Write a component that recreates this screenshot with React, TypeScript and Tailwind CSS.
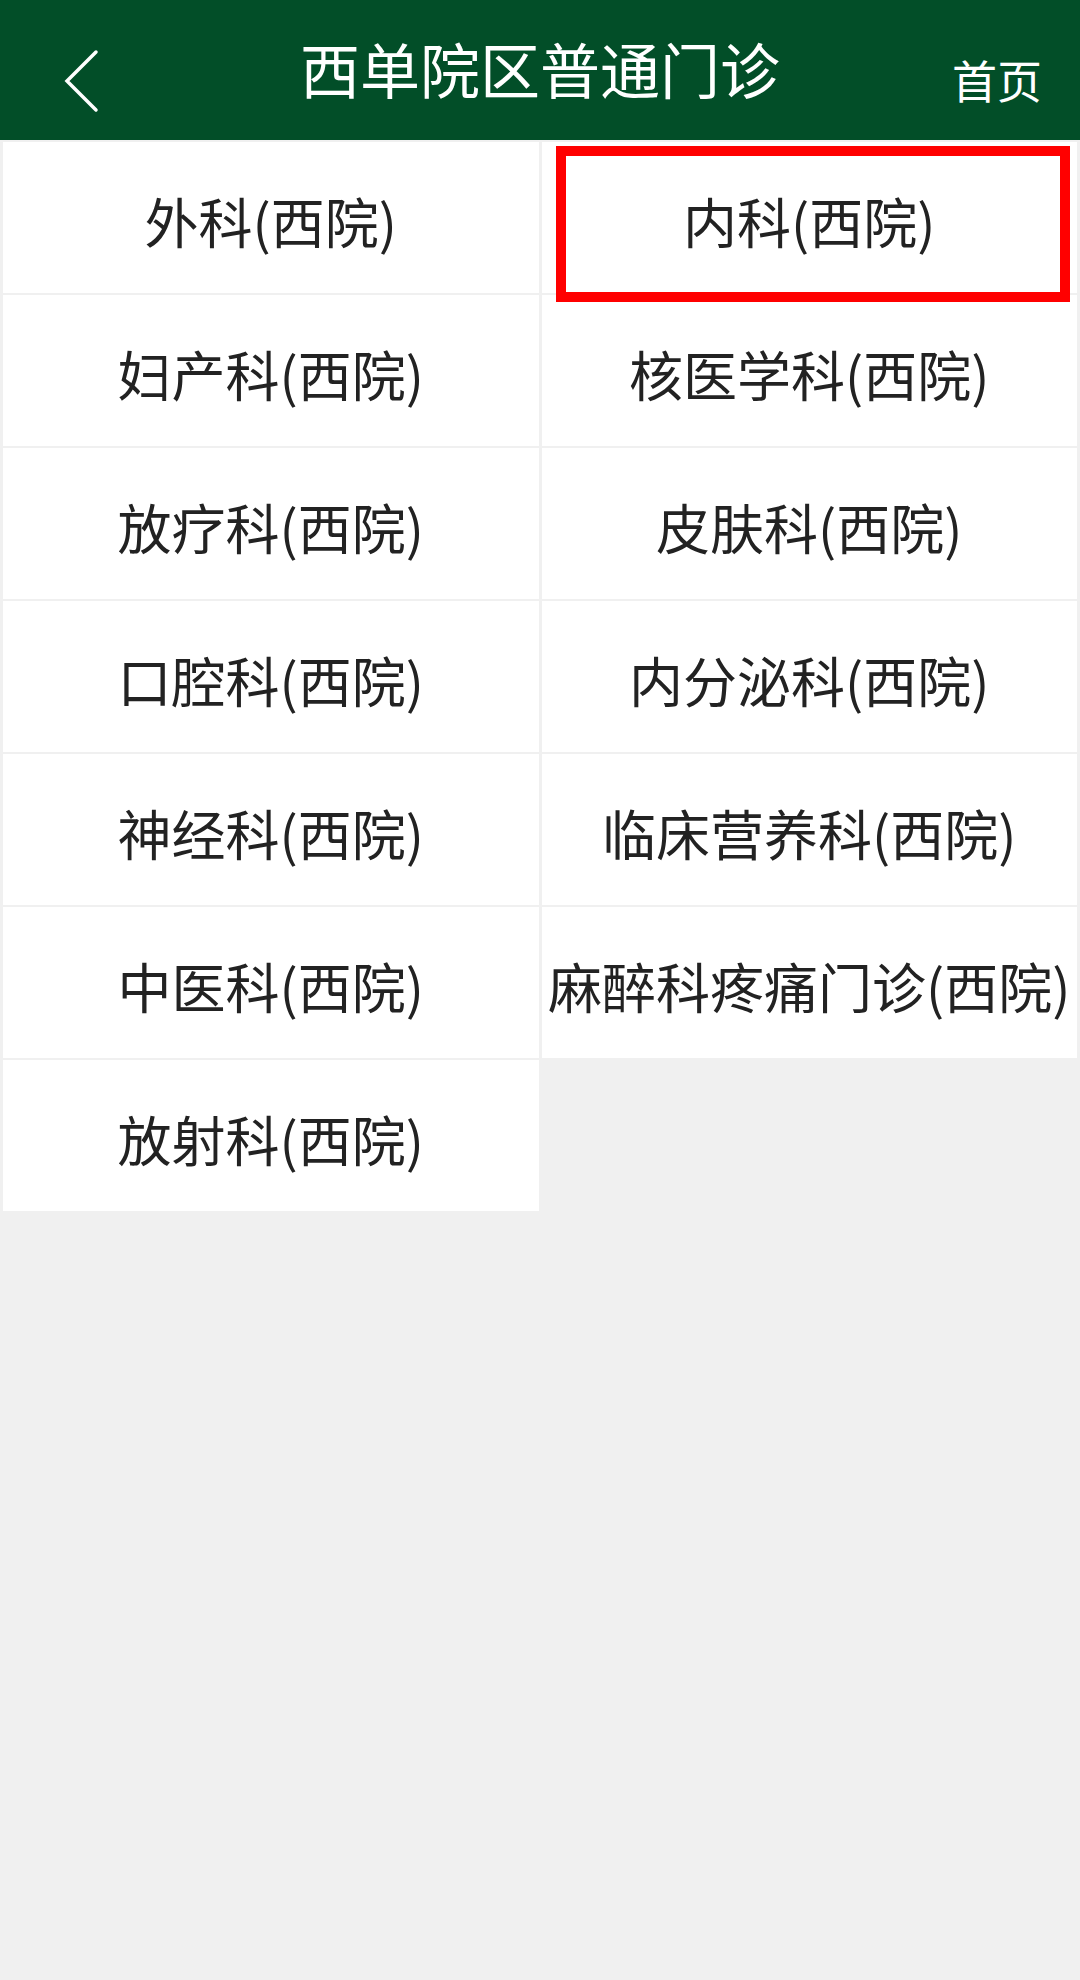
import React from "react";

const departments = [
  "外科(西院)",
  "内科(西院)",
  "妇产科(西院)",
  "核医学科(西院)",
  "放疗科(西院)",
  "皮肤科(西院)",
  "口腔科(西院)",
  "内分泌科(西院)",
  "神经科(西院)",
  "临床营养科(西院)",
  "中医科(西院)",
  "麻醉科疼痛门诊(西院)",
  "放射科(西院)",
];

const font = {
  fontFamily: '"Noto Sans CJK SC", "Noto Sans", sans-serif',
};

function BackIcon() {
  return (
    <svg width="40" height="64" viewBox="0 0 40 64" fill="none">
      <polyline
        points="34,3 5,32 34,61"
        stroke="white"
        strokeWidth="3.5"
        strokeLinecap="round"
        strokeLinejoin="miter"
      />
    </svg>
  );
}

export default function App() {
  return (
    <div
      className="w-[1080px] min-h-[1980px] bg-[#f0f0f0] relative"
      style={font}
    >
      {/* 顶部栏 */}
      <div className="h-[140px] bg-[#024e28] flex items-center justify-between relative">
        <button className="pl-[62px] pt-[22px]">
          <BackIcon />
        </button>
        <h1 className="absolute left-0 right-0 text-center text-white text-[60px] leading-none -mt-[4px] pointer-events-none">
          西单院区普通门诊
        </h1>
        <span className="pr-[38px] pt-[18px] text-white text-[45px] leading-none">
          首页
        </span>
      </div>

      {/* 科室列表 */}
      <div className="grid grid-cols-2 gap-x-[3px] gap-y-[2px] px-[3px] pt-[2px]">
        {departments.map((name) => (
          <div
            key={name}
            className="h-[151px] bg-white flex items-center justify-center"
          >
            <span className="text-[#222222] text-[54px] leading-none pt-[6px] whitespace-nowrap">
              {name}
            </span>
          </div>
        ))}
      </div>

      {/* 选中框 */}
      <div className="absolute left-[556px] top-[146px] w-[514px] h-[156px] border-[10px] border-[#ff0000] pointer-events-none" />
    </div>
  );
}
